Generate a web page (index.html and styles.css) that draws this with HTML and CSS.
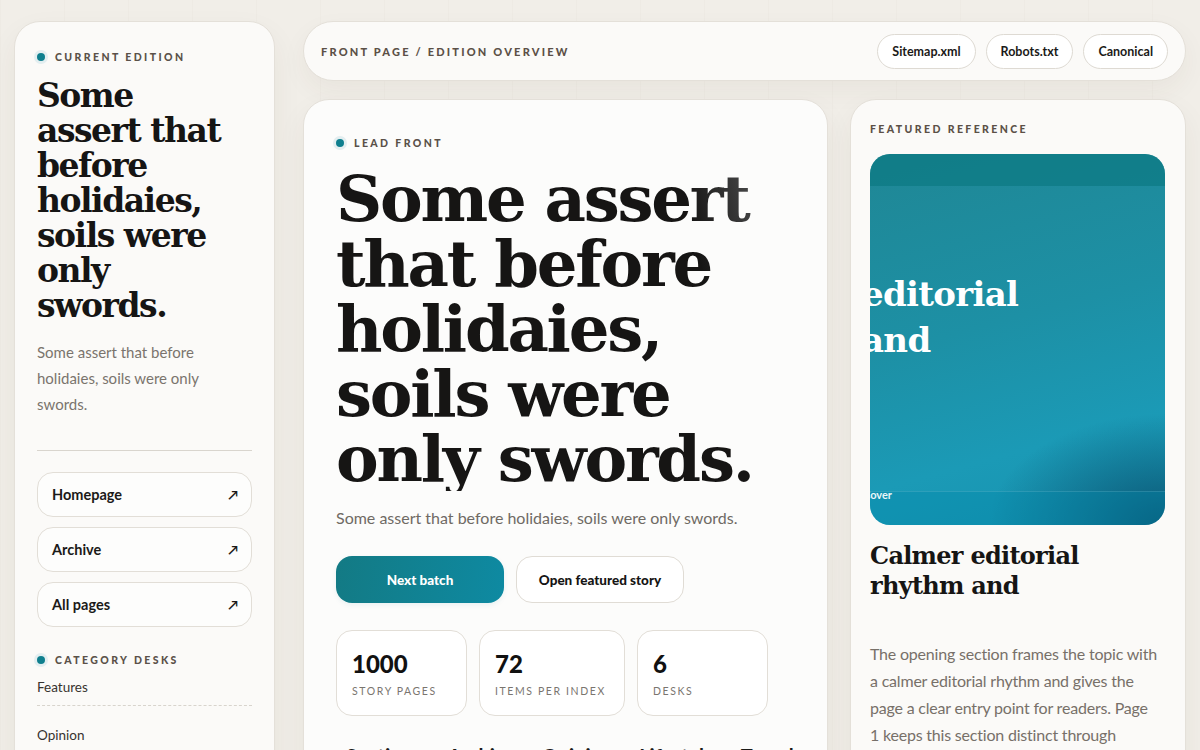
FILE: index.html
```html
<!DOCTYPE html>
<html lang="en">
<head>
<meta charset="UTF-8" />
<meta name="viewport" content="width=device-width, initial-scale=1" />
<title>Front page / Edition overview</title>
<link rel="stylesheet" href="styles.css">
</head>
<body>
  <div class="page">
    <aside class="card sidebar">
      <div class="eyebrow"><span class="dot"></span>Current edition</div>
      <h1 class="side-title">Some assert that before holidaies, soils were only swords.</h1>
      <p class="side-copy">Some assert that before holidaies, soils were only swords.</p>
      <hr class="rule">

      <nav class="side-nav">
        <a class="nav-item" href="#">Homepage <span class="arrow">&#8599;</span></a>
        <a class="nav-item" href="#">Archive <span class="arrow">&#8599;</span></a>
        <a class="nav-item" href="#">All pages <span class="arrow">&#8599;</span></a>
      </nav>

      <div class="eyebrow desks-label"><span class="dot"></span>Category desks</div>
      <ul class="desk-list">
        <li>Features</li>
        <li>Opinion</li>
        <li>Culture</li>
      </ul>
    </aside>

    <main class="content">
      <header class="topbar">
        <div class="crumbs">Front page / Edition overview</div>
        <div class="pills">
          <a class="pill" href="#">Sitemap.xml</a>
          <a class="pill" href="#">Robots.txt</a>
          <a class="pill" href="#">Canonical</a>
        </div>
      </header>

      <div class="columns">
        <section class="card lead">
          <div class="eyebrow"><span class="dot"></span>Lead front</div>
          <h2 class="lead-title">Some assert that before holidaies, soils were only swords.</h2>
          <p class="lead-copy">Some assert that before holidaies, soils were only swords.</p>

          <div class="actions">
            <a class="btn btn-primary" href="#">Next batch</a>
            <a class="btn btn-ghost" href="#">Open featured story</a>
          </div>

          <div class="stats">
            <div class="stat"><strong>1000</strong><span>Story pages</span></div>
            <div class="stat"><strong>72</strong><span>Items per index</span></div>
            <div class="stat"><strong>6</strong><span>Desks</span></div>
          </div>

          <div class="desk-tabs">
            <span>Sections</span>
            <span>Archive</span>
            <span>Opinion</span>
            <span>Lifestyle</span>
            <span>Travel</span>
          </div>
        </section>

        <aside class="card feature">
          <div class="eyebrow plain">Featured reference</div>
          <div class="cover">
            <div class="cover-top"></div>
            <div class="cover-body">
              <div class="cover-title">editorial<br>and</div>
            </div>
            <div class="cover-foot"><span class="cover-tag">Cover</span></div>
          </div>
          <h3 class="feature-title">Calmer editorial rhythm and</h3>
          <p class="feature-copy">The opening section frames the topic with a calmer editorial rhythm and gives the page a clear entry point for readers. Page 1 keeps this section distinct through dedicated framing.</p>
        </aside>
      </div>
    </main>
  </div>
</body>
</html>
```

FILE: styles.css
```css
html, body {
  margin: 0; padding: 0; height: 100%;
  overflow: hidden;
}
body {
  font-family: Lato, "Noto Sans", sans-serif;
  color: #1b1a18;
  background: #f1eee8;
  background-image: repeating-linear-gradient(90deg, rgba(120,100,70,0.025) 0 1px, transparent 1px 64px);
}
a { color: inherit; text-decoration: none; }

.page {
  display: grid;
  grid-template-columns: 261px 1fr;
  gap: 28px;
  padding: 21px 14px 0;
  align-items: start;
}

.card {
  background: #fbfaf8;
  border: 1px solid #e4e0d9;
  border-radius: 26px;
  box-shadow: 0 12px 30px rgba(70, 55, 30, 0.06);
  box-sizing: border-box;
}

/* eyebrow labels */
.eyebrow {
  display: flex;
  align-items: center;
  gap: 10px;
  font-size: 10.5px;
  line-height: 14px;
  font-weight: 900;
  letter-spacing: 2.4px;
  text-transform: uppercase;
  color: #5a5149;
}
.dot {
  width: 8px; height: 8px;
  border-radius: 50%;
  background: #0f7f8e;
  box-shadow: 0 0 0 3px #e3eef0;
}

/* sidebar */
.sidebar {
  padding: 28px 22px 40px;
  min-height: 800px;
}
.side-title {
  font-family: "DejaVu Serif", serif;
  font-size: 33px;
  line-height: 35px;
  letter-spacing: -0.045em;
  font-weight: 700;
  max-width: 200px;
  margin: 14px 0 0;
  color: #161514;
}
.side-copy {
  font-size: 15px;
  line-height: 26px;
  color: #7a746d;
  max-width: 178px;
  margin: 16px 0 0;
}
.rule {
  border: 0;
  border-top: 1px solid #d9d5ce;
  margin: 33px 0 21px;
}
.side-nav {
  display: flex;
  flex-direction: column;
  gap: 10px;
}
.nav-item {
  display: flex;
  align-items: center;
  justify-content: space-between;
  height: 45px;
  box-sizing: border-box;
  padding: 0 13px 0 14px;
  background: #fdfdfc;
  border: 1px solid #e2ded7;
  border-radius: 16px;
  font-size: 14.5px;
  font-weight: 700;
  color: #1b1a18;
}
.arrow { font-size: 13px; font-weight: 700; }
.desks-label { margin-top: 26px; }
.desk-list {
  list-style: none;
  margin: 10px 0 0;
  padding: 0;
}
.desk-list li {
  font-size: 13.5px;
  line-height: 20px;
  color: #37332f;
  padding: 19px 0 8px;
  border-bottom: 1px dashed #d8d4cd;
}
.desk-list li:first-child { padding-top: 0; }

/* content column */
.content {
  display: flex;
  flex-direction: column;
  gap: 18px;
}
.topbar {
  display: flex;
  align-items: center;
  justify-content: space-between;
  height: 60px;
  box-sizing: border-box;
  padding: 0 17px;
  background: #fbfaf8;
  border: 1px solid #e4e0d9;
  border-radius: 30px;
  box-shadow: 0 10px 26px rgba(70, 55, 30, 0.05);
}
.crumbs {
  font-size: 11px;
  font-weight: 900;
  letter-spacing: 2.2px;
  text-transform: uppercase;
  color: #5b5047;
}
.pills { display: flex; gap: 10px; }
.pill {
  height: 35px;
  display: flex;
  align-items: center;
  padding: 0 14px;
  box-sizing: border-box;
  background: #fff;
  border: 1px solid #dedad3;
  border-radius: 18px;
  font-size: 12.5px;
  font-weight: 700;
  color: #1b1a18;
}

.columns {
  display: grid;
  grid-template-columns: 525px 336px;
  gap: 22px;
  align-items: start;
}

/* lead card */
.lead {
  background: #fcfcfb;
  padding: 36px 32px 40px;
  min-height: 700px;
}
.lead-title {
  font-family: "DejaVu Serif", serif;
  font-size: 64px;
  line-height: 65px;
  letter-spacing: -0.035em;
  font-weight: 700;
  margin: 16px 0 0;
  max-width: 460px;
  color: #161514;
  background: linear-gradient(256deg, #6e6e6e 0%, #3a3a3a 12%, #161514 22%);
  -webkit-background-clip: text;
  background-clip: text;
  -webkit-text-fill-color: transparent;
}
.lead-copy {
  font-size: 16px;
  line-height: 24px;
  color: #6f6a64;
  margin: 15px 0 0;
}
.actions {
  display: flex;
  gap: 12px;
  margin-top: 26px;
}
.btn {
  width: 168px;
  height: 47px;
  box-sizing: border-box;
  display: flex;
  align-items: center;
  justify-content: center;
  border-radius: 16px;
  font-size: 13.5px;
  font-weight: 900;
}
.btn-primary {
  color: #fff;
  background: linear-gradient(100deg, #137a84 0%, #0e8aa2 100%);
  box-shadow: 0 2px 5px rgba(14, 120, 140, 0.08);
}
.btn-ghost {
  color: #161514;
  background: #fff;
  border: 1px solid #e0dcd5;
}
.stats {
  display: flex;
  gap: 12px;
  margin-top: 27px;
}
.stat {
  display: flex;
  flex-direction: column;
  height: 86px;
  box-sizing: border-box;
  padding: 18px 15px 0;
  background: #fff;
  border: 1px solid #e2ded7;
  border-radius: 16px;
}
.stat:nth-child(1) { width: 131px; }
.stat:nth-child(2) { width: 146px; }
.stat:nth-child(3) { width: 131px; }
.stat strong {
  font-size: 24px;
  line-height: 30px;
  font-weight: 900;
  color: #111;
}
.stat span {
  margin-top: 6px;
  font-size: 10.5px;
  letter-spacing: 1.6px;
  white-space: nowrap;
  text-transform: uppercase;
  color: #7a756f;
}
.desk-tabs {
  display: flex;
  gap: 26px;
  margin-top: 28px;
  padding-left: 10px;
  font-size: 20px;
  font-weight: 700;
  color: #1b1a18;
}

/* featured card */
.feature {
  padding: 22px 20px 40px 19px;
  min-height: 700px;
}
.eyebrow.plain { color: #5b5047; }
.cover {
  margin-top: 18px;
  height: 371px;
  border-radius: 20px;
  overflow: hidden;
  display: flex;
  flex-direction: column;
  background:
    radial-gradient(ellipse 60% 30% at 100% 100%, #0b5674 0%, rgba(11, 86, 116, 0) 100%),
    linear-gradient(165deg, #1f8795 0%, #1d90a5 45%, #1b9ab6 75%, #1692b0 100%);
}
.cover-top {
  height: 32px;
  background: rgba(8, 118, 126, 0.6);
}
.cover-body {
  flex: 1;
  padding-top: 85px;
}
.cover-title {
  margin-left: -8px;
  font-family: "DejaVu Serif", serif;
  font-size: 34px;
  line-height: 46px;
  letter-spacing: -0.02em;
  font-weight: 700;
  color: #fff;
}
.cover-foot {
  height: 33px;
  border-top: 1px solid rgba(255, 255, 255, 0.12);
  background: rgba(0, 135, 170, 0.35);
}
.cover-tag {
  display: block;
  margin: -4px 0 0 -7px;
  font-size: 11px;
  line-height: 14px;
  font-weight: 700;
  color: #eaf6f8;
}
.feature-title {
  font-family: "DejaVu Serif", serif;
  font-size: 24px;
  line-height: 30px;
  letter-spacing: -0.03em;
  font-weight: 700;
  margin: 16px 0 0;
  color: #161514;
}
.feature-copy {
  font-size: 16px;
  line-height: 27px;
  letter-spacing: -0.2px;
  color: #777069;
  max-width: 289px;
  margin: 39px 0 0;
}
```
